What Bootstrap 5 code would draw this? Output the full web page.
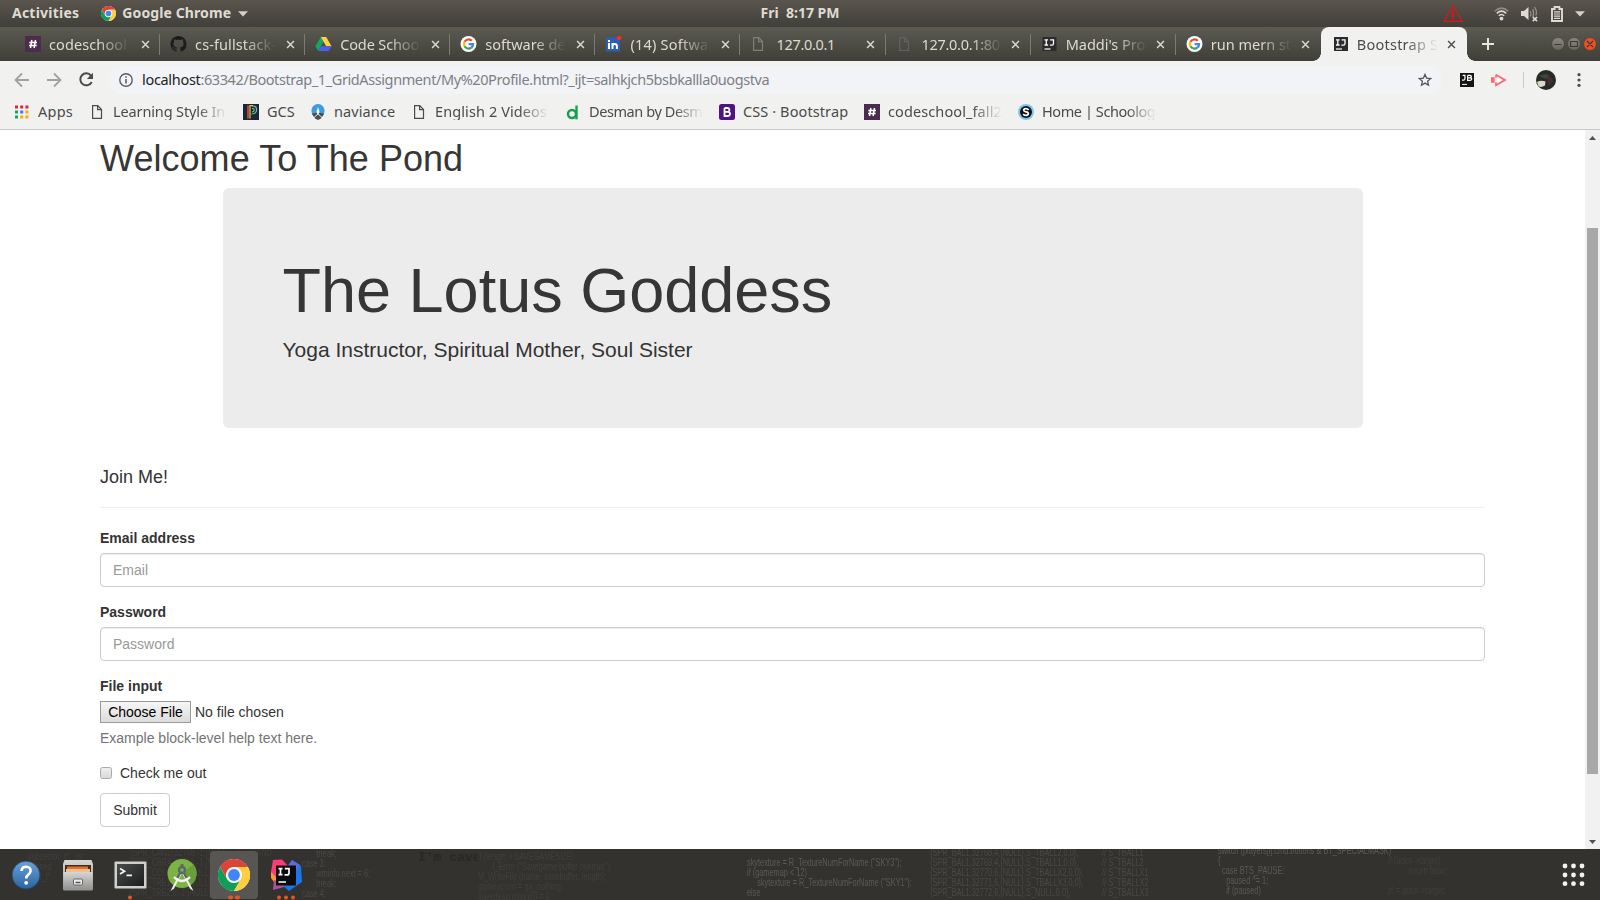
<!DOCTYPE html>
<html lang="en">
<head>
<meta charset="utf-8">
<title>Bootstrap Sample</title>
<link rel="stylesheet" href="https://cdn.jsdelivr.net/npm/bootstrap@5.3.0/dist/css/bootstrap.min.css">
<style>
html,body{height:100%;overflow:hidden}
body{font-family:"Noto Sans","Open Sans",sans-serif;font-size:14.5px;line-height:1.3;color:#4b4b4b;background:#fff}
svg{display:block;flex:none;overflow:visible}
.ls-a{letter-spacing:.23px}.ls-b{letter-spacing:.1px}.ls-c{letter-spacing:-.13px}.ls-d{letter-spacing:-.31px}.ls-e{letter-spacing:-.42px}

/* desktop top bar */
.topbar{height:27px;background:linear-gradient(#5a564e,#403f3a);color:#dfdbd2;font-weight:700;font-size:14px;display:grid;grid-template-columns:1fr auto 1fr}
.topbar .left-side{padding-left:12px}
.topbar .app-menu{margin-left:21.5px;gap:6.5px}
.topbar .tray{padding-right:15px}
.warn{margin-right:31px}.vol{margin:0 13px 0 4px}.batt{margin-right:12px}

/* browser tabs */
.tabstrip{height:34px;background:linear-gradient(#5c5b52,#3f3e38);color:#dedad1;padding-left:15px}
.tab{width:145.1px;padding:0 10.5px 0 10px;position:relative}
.tab:not(.tab-active):not(.tab-last)::after{content:"";position:absolute;right:0;top:7px;height:21px;width:1px;background:#7d7b72}
.tab .tab-name,.mark-name{white-space:nowrap;overflow:hidden}
.tab .tab-name{width:81px;margin-left:8px;-webkit-mask-image:linear-gradient(90deg,#000 60%,transparent 100%)}
.tab .tab-name.full{-webkit-mask-image:none}
.tab-close{margin-left:auto}
.tab-active{background:#f1f1ef;color:#4c4c4a;border-radius:8px 8px 0 0;width:146px;padding-left:12px;padding-right:11px}
.tab-active .foot{position:absolute;bottom:0;width:8px;height:8px}
.foot-l{left:-8px;background:radial-gradient(circle at 0 0,transparent 7.5px,#f1f1ef 8px)}
.foot-r{right:-8px;background:radial-gradient(circle at 100% 0,transparent 7.5px,#f1f1ef 8px)}
.strip-end{padding:0 3px 0 15px}

/* address row */
.toolbar{height:37px;background:#f1f1ef;padding-left:14px;padding-right:16px}
.omnibox{height:28px;width:1334px;border-radius:14px;background:#f1f3f7;color:#7e8084;padding:0 10px 0 11px}
.omnibox b{font-weight:400;color:#222}
.url{margin-left:9px;letter-spacing:-.408px}
.ext-1{margin-left:18px}.ext-2{margin-left:16px}.more{margin-left:21px;margin-right:3px}
/* bookmarks row */
.marks{height:32px;background:#f1f1ef;border-bottom:1px solid #c9c9ca;padding-left:14px}
.mark-name,.bm svg{position:relative;top:-1px}
.mark-name{margin-top:-2px}
.bm{width:154px;gap:8px;margin-top:-1px}
.bm.s1{width:75px}.bm.s2{width:67px}.bm.s3{width:101px}.bm.s4{width:145px}
.mark-name.cut{width:114px;-webkit-mask-image:linear-gradient(90deg,#000 74%,transparent 100%)}

/* page */
.page-view{height:719px;background:#fff}
.page-body{font-family:"Liberation Sans",Arial,sans-serif;font-size:14px;line-height:20px;color:#333;padding:8.7px 100px 0 100px;width:1585px}
.page-body h1{font-size:36px;line-height:1.1;margin:0 0 10px;font-weight:500;color:#363636;letter-spacing:.05px}
.hero{background:#ececec;border-radius:6px;width:1140px;margin:0 auto 30.7px 123px;padding:48px 59.5px}
.hero h1{font-size:63px;margin:20px 0 9.3px;letter-spacing:0}
.hero p{font-size:21px;line-height:30px;margin:0 0 15px}
.page-body h4{font-size:18px;line-height:19.8px;font-weight:500;margin:0;padding-top:9px;margin-bottom:19.5px}
.page-body hr{margin:0 0 20px;border-top:1px solid #eee;opacity:1;color:inherit}
.page-body .form-label{font-weight:700;margin:0 0 5px;display:block}
.page-body .form-control{height:34px;font-size:14px;line-height:20px;padding:6px 12px;border:1px solid #ccc;border-radius:4px;box-shadow:inset 0 1px 1px rgba(0,0,0,.075);margin-bottom:15px}
.page-body .form-control::placeholder{color:#999}
.choose{height:22px;width:91px;border:1px solid #999;border-radius:0;background:linear-gradient(#f6f6f6,#dcdcdc);color:#000;font-size:14px;line-height:20px;padding:0;text-align:center}
.helper{color:#737373;margin:5px 0 15px}
.tick{width:12px;height:12px;border:1px solid #a9a9a9;border-radius:2.5px;background:linear-gradient(#eee,#d9d9d9)}
.submit-btn{width:70px;height:34px;border:1px solid #ccc;border-radius:4px;font-size:14px;line-height:20px;padding:6px 0;color:#333;margin-top:10px}

.scrollcol{width:15px;background:#f1f1f1;padding:6px 2px 5px}
.thumb{width:11px;height:546px;background:#a8a8a8;margin-top:88px}

/* dock */
.dock{height:51px;background:#33322e;position:relative;overflow:hidden}
.launchers{padding:2px 15px 0 2px}
.dock .slot{width:48px;height:48px;margin-right:4px;border-radius:4px;position:relative}
.dock .slot.on{background:#575652}
.dock .slot svg{margin-top:-1px}
.pips{position:absolute;left:0;right:0;bottom:0;display:flex;gap:2.6px;justify-content:center;transform:translateY(.5px)}
.pips i{width:4.4px;height:4.4px;border-radius:50%;background:#e95420}
/* code printed on the wallpaper, visible through the dock */
.code{position:absolute;font:10px/10px "Liberation Sans",sans-serif;white-space:pre;color:#5b5a56;transform:scaleX(.735);transform-origin:0 0}
.dim{color:#4a4945}.dimmer{color:#413f3b}
.mono{font:bold 13px/14px "Liberation Mono",monospace;transform:none;color:#292825}
.c1{left:28px;top:3px}.c2{left:130px;top:-1px}.c3{left:302px;top:0}.c4{left:418px;top:2px}.c5{left:478px;top:3px}
.c6{left:747px;top:9px}.c7{left:930px;top:-1px}.c8{left:1102px;top:-1px}.c9{left:1218px;top:-3px}.c10{left:1388px;top:7px}
</style>
<script src="https://cdn.jsdelivr.net/npm/bootstrap@5.3.0/dist/js/bootstrap.bundle.min.js"></script>
</head>
<body>
<svg width="0" height="0" class="position-absolute">
 <defs>
  <linearGradient id="gBlue" x2="0" y2="1"><stop stop-color="#6ba0dc"/><stop offset="1" stop-color="#2a659f"/></linearGradient>
  <linearGradient id="gGrey" x2="0" y2="1"><stop stop-color="#d6d6d4"/><stop offset="1" stop-color="#949492"/></linearGradient>
  <linearGradient id="gTerm" x2="1" y2="1"><stop stop-color="#4a4b4b"/><stop offset="1" stop-color="#1c1d1d"/></linearGradient>
  <linearGradient id="gBtn" x2="0" y2="1"><stop stop-color="#8b897f"/><stop offset="1" stop-color="#66645c"/></linearGradient>
  <symbol id="chrome" viewBox="0 0 32 32">
   <circle cx="16" cy="16" r="16" fill="#fff"/>
   <path d="M16 8H29.86A16 16 0 0 0 2.14 8L9.07 20A8 8 0 0 1 16 8Z" fill="#db4437"/>
   <path d="M9.07 20L2.14 8A16 16 0 0 0 16 32L22.93 20A8 8 0 0 1 9.07 20Z" fill="#0f9d58"/>
   <path d="M22.93 20L16 32A16 16 0 0 0 29.86 8H16A8 8 0 0 1 22.93 20Z" fill="#ffcd40"/>
   <circle cx="16" cy="16" r="7.3" fill="#f1f1f1"/><circle cx="16" cy="16" r="5.9" fill="#4285f4"/>
  </symbol>
  <symbol id="slack" viewBox="0 0 16 16"><rect width="16" height="16" fill="#4b2c4d"/><path d="M6.9 4L5.5 12M10.5 4L9.1 12M4.3 6.4H12M4 9.6H11.7" stroke="#fff" stroke-width="1.5" fill="none"/></symbol>
  <symbol id="goog" viewBox="0 0 16 16"><circle cx="8" cy="8" r="8" fill="#fff"/><g fill="none" stroke-width="2.2">
   <path d="M4 5.8A4.6 4.6 0 0 1 11.3 4.8" stroke="#ea4335"/><path d="M4 5.8A4.6 4.6 0 0 0 4 10.3" stroke="#fbbc05"/><path d="M4 10.3A4.6 4.6 0 0 0 10.8 11.6" stroke="#34a853"/><path d="M10.8 11.6A4.6 4.6 0 0 0 12.6 8.1H8.1" stroke="#4285f4"/></g></symbol>
  <symbol id="file" viewBox="0 0 16 16"><path d="M3.6 1.7H8.8L12.5 5.5V14.4H3.6ZM8.6 1.9V5.7H12.4" fill="none" stroke="currentColor" stroke-width="1.2"/></symbol>
  <symbol id="ij" viewBox="0 0 14 14"><rect width="14" height="14" fill="#2b2b2e"/><path d="M2 2.8H5.6M3.8 2.8V8M2 8H5.6M7.6 2.8H11V6.6Q11 8.2 9.4 8.2H7.4" stroke="#fff" stroke-width="1.3" fill="none"/><path d="M2 12H8" stroke="#fff" stroke-width="1.2"/></symbol>
  <symbol id="x" viewBox="0 0 10 10"><path d="M1.2 1.2L8.8 8.8M8.8 1.2L1.2 8.8" stroke="currentColor" stroke-width="1.6"/></symbol>
 </defs>
</svg>

<header class="topbar">
 <div class="left-side d-flex align-items-center"><span class="ls-a">Activities</span>
  <div class="app-menu d-flex align-items-center"><svg width="15" height="15"><use href="#chrome"/></svg><span class="ls-b">Google Chrome</span><svg width="10" height="6"><path d="M0 .3H10L5 5.5Z" fill="#d5d1c8"/></svg></div></div>
 <div class="d-flex align-items-center">Fri&nbsp; 8:17 PM</div>
 <div class="tray d-flex align-items-center justify-content-end">
  <svg class="warn" width="20" height="17" viewBox="0 0 20 17"><path d="M10 .8L19.2 16.4H.8Z" fill="none" stroke="#f01010" stroke-width="1.1"/><path d="M10 5.5V12M10 13.2V15" stroke="#f01010" stroke-width="1.7"/></svg>
  <svg width="15" height="14" viewBox="0 0 15 14" class="me-2"><g fill="none" stroke="#dfdbd2" stroke-width="1.5"><path d="M.8 4.2Q7.5-2 14.2 4.2" opacity=".45"/><path d="M2.8 6.4Q7.5 1.9 12.2 6.4M4.8 8.8Q7.5 6 10.2 8.8"/></g><circle cx="7.5" cy="11.6" r="1.9" fill="#dfdbd2"/></svg>
  <svg class="vol" width="17" height="16" viewBox="0 0 17 16"><path d="M0 5H3L7.5 1V14L3 10H0Z" fill="#dfdbd2"/><path d="M9.3 5Q10.5 7.5 9.3 10.5M11.6 3Q13.6 7 11.8 11M13.6 1Q16.6 5.5 14.8 9.5" fill="none" stroke="#dfdbd2" stroke-width="1.2" opacity=".5"/><path d="M11.8 11L16 15.2M16 11L11.8 15.2" stroke="#dfdbd2" stroke-width="1.7"/></svg>
  <svg class="batt" width="12" height="16" viewBox="0 0 12 16"><path d="M1 3H3.6V1H8.4V3H11V15H1Z" fill="none" stroke="#dfdbd2" stroke-width="1.9"/><path d="M3 5.8H9M3 8H9M3 10.2H9M3 12.4H9" stroke="#dfdbd2" stroke-width="1.2"/></svg>
  <svg width="10" height="6"><path d="M0 .3H10L5 5.5Z" fill="#d5d1c8"/></svg>
 </div>
</header>

<div class="tabstrip d-flex">
 <div class="tab d-flex align-items-center"><svg width="16" height="16"><use href="#slack"/></svg><div class="tab-name ls-b">codeschool_</div><svg class="tab-close" width="9" height="9"><use href="#x"/></svg></div>
 <div class="tab d-flex align-items-center"><svg width="17" height="16" viewBox="0 0 16 16"><path fill="#1b1c1e" d="M8 0C3.58 0 0 3.58 0 8c0 3.54 2.29 6.53 5.47 7.59.4.07.55-.17.55-.38 0-.19-.01-.82-.01-1.49-2.01.37-2.53-.49-2.69-.94-.09-.23-.48-.94-.82-1.13-.28-.15-.68-.52-.01-.53.63-.01 1.08.58 1.23.82.72 1.21 1.87.87 2.33.66.07-.52.28-.87.51-1.07-1.78-.2-3.64-.89-3.64-3.95 0-.87.31-1.59.82-2.15-.08-.2-.36-1.02.08-2.12 0 0 .67-.21 2.2.82.64-.18 1.32-.27 2-.27s1.36.09 2 .27c1.53-1.04 2.2-.82 2.2-.82.44 1.1.16 1.92.08 2.12.51.56.82 1.27.82 2.15 0 3.07-1.87 3.75-3.65 3.95.29.25.54.73.54 1.48 0 1.07-.01 1.93-.01 2.2 0 .21.15.46.55.38A8.01 8.01 0 0 0 16 8c0-4.42-3.58-8-8-8Z"/></svg><div class="tab-name ls-b">cs-fullstack-</div><svg class="tab-close" width="9" height="9"><use href="#x"/></svg></div>
 <div class="tab d-flex align-items-center"><svg width="17" height="14" viewBox="0 0 15 13"><path d="M5 0L7.5 4.4 2.5 13 0 8.7Z" fill="#11a861"/><path d="M5 0H10L15 8.7H10Z" fill="#ffcf48"/><path d="M5 8.7H15L12.5 13H2.5Z" fill="#4b5fe8"/></svg><div class="tab-name ls-c">Code Schoo</div><svg class="tab-close" width="9" height="9"><use href="#x"/></svg></div>
 <div class="tab d-flex align-items-center"><svg width="17" height="16"><use href="#goog"/></svg><div class="tab-name">software de</div><svg class="tab-close" width="9" height="9"><use href="#x"/></svg></div>
 <div class="tab d-flex align-items-center"><svg width="17" height="16" viewBox="0 0 17 16"><rect x="1" y="1.5" width="14" height="14" fill="#2c5fb3"/><rect x="3" y="7" width="2" height="6" fill="#fff"/><rect x="3" y="4" width="2" height="2" fill="#fff"/><path d="M7.5 13V7M7.5 9.8Q7.7 7.9 9.7 7.9Q11.9 7.9 11.9 10V13" stroke="#fff" stroke-width="2" fill="none"/><circle cx="14" cy="2" r="2.3" fill="#f22c3e"/></svg><div class="tab-name ls-a">(14) Softwar</div><svg class="tab-close" width="9" height="9"><use href="#x"/></svg></div>
 <div class="tab d-flex align-items-center"><svg width="18" height="16" viewBox="1 0 16 16" color="#7f7e78"><use href="#file" width="16" height="16"/></svg><div class="tab-name full ls-d">127.0.0.1</div><svg class="tab-close" width="9" height="9"><use href="#x"/></svg></div>
 <div class="tab d-flex align-items-center"><svg width="18" height="16" viewBox="1 0 16 16" color="#62625f"><use href="#file" width="16" height="16"/></svg><div class="tab-name ls-d">127.0.0.1:80</div><svg class="tab-close" width="9" height="9"><use href="#x"/></svg></div>
 <div class="tab d-flex align-items-center"><svg width="17" height="14"><use href="#ij"/></svg><div class="tab-name">Maddi's Pro</div><svg class="tab-close" width="9" height="9"><use href="#x"/></svg></div>
 <div class="tab tab-last d-flex align-items-center"><svg width="17" height="16"><use href="#goog"/></svg><div class="tab-name">run mern st</div><svg class="tab-close" width="9" height="9"><use href="#x"/></svg></div>
 <div class="tab tab-active d-flex align-items-center"><span class="foot foot-l"></span><span class="foot foot-r"></span><svg width="16" height="14"><use href="#ij"/></svg><div class="tab-name ls-a">Bootstrap S</div><svg class="tab-close" width="9" height="9"><use href="#x"/></svg></div>
 <div class="strip-end d-flex align-items-center flex-fill">
  <svg width="12" height="12" viewBox="0 0 12 12"><path d="M6 0V12M0 6H12" stroke="#e8e5dc" stroke-width="2"/></svg>
  <svg class="ms-auto" width="46" height="14" viewBox="0 0 46 14"><g stroke="#3b3a36"><circle cx="7" cy="7" r="6.4" fill="url(#gBtn)" stroke-width=".6"/><circle cx="23" cy="7" r="6.4" fill="url(#gBtn)" stroke-width=".6"/><circle cx="39" cy="7" r="6.4" fill="#ea5226" stroke-width=".6"/><path d="M3.5 7.5H10.5M19.5 4.5H26.5V9.5H19.5ZM36 4L42 10M42 4L36 10" fill="none" stroke-width="1.2"/></g></svg>
 </div>
</div>

<div class="toolbar d-flex align-items-center">
 <svg width="94" height="16" viewBox="0 0 94 16" fill="none"><path d="M15 8H2M8 1.5L1.5 8L8 14.5" stroke="#a2a2a1" stroke-width="1.8"/><path d="M33 8H46M40 1.5L46.5 8L40 14.5" stroke="#a2a2a1" stroke-width="1.8"/><path d="M77 3.6A6 6 0 1 0 77.7 10" stroke="#4b4b4d" stroke-width="2"/><path d="M79 .8V7H72.8Z" fill="#4b4b4d"/></svg>
 <div class="omnibox d-flex align-items-center">
  <svg width="14" height="14" viewBox="0 0 14 14"><circle cx="7" cy="7" r="6.2" fill="none" stroke="#5c5e62" stroke-width="1.4"/><path d="M7 6V10.5M7 3.2V4.8" stroke="#5c5e62" stroke-width="1.6"/></svg>
  <span class="url text-nowrap"><b class="ls-d">localhost</b>:63342/Bootstrap_1_GridAssignment/My%20Profile.html?_ijt=salhkjch5bsbkallla0uogstva</span>
  <svg class="ms-auto" width="14" height="14" viewBox="0 0 14 14"><path d="M7 1.4L8.6 5.1L12.7 5.5L9.6 8.2L10.5 12.2L7 10.1L3.5 12.2L4.4 8.2L1.3 5.5L5.4 5.1Z" fill="none" stroke="#55565a" stroke-width="1.3"/></svg>
 </div>
 <svg class="ext-1" width="14" height="14" viewBox="0 0 14 14"><rect width="14" height="14" fill="#161616"/><path d="M2 7.2H3.5Q4.9 7.2 4.9 5.7V2.3H2.6M7.6 2.4V7.3H10.2Q11.8 7.2 11.8 6Q11.8 4.9 10.2 4.8H7.6M10 4.7Q11.4 4.6 11.4 3.6Q11.4 2.5 10 2.4H7.6" fill="none" stroke="#fff" stroke-width="1.2"/><path d="M2 11.4H7" stroke="#fff"/></svg>
 <svg class="ext-2" width="17" height="14" viewBox="0 0 17 14"><path d="M1 4.2H4.6V9.8H1Z" fill="#ff6673"/><path d="M6 1.8L15 7L6 12.2V9.5M6 1.8V4.5" fill="none" stroke="#ff6673" stroke-width="1.8"/><path d="M6.5 5L12 7L6.5 9Z" fill="#fff"/></svg>
 <svg class="ext-2" width="1" height="16"><path d="M.5 0V16" stroke="#cacaca"/></svg>
 <svg width="20" height="20" viewBox="0 0 20 20" class="ms-auto"><circle cx="10" cy="10" r="10" fill="#292a28"/><path d="M1 12Q5 10 9.5 11.5L9 15.5Q5 18 2.5 16Z" fill="#d9d9c4"/><path d="M10 6Q15 5 17 11L13 16Z" fill="#46302e"/><path d="M3 6Q8 3 13 5L10 9Z" fill="#3e4640"/></svg>
 <svg class="more" width="4" height="14" viewBox="0 0 4 14"><g fill="#4b4b4d"><circle cx="2" cy="1.7" r="1.6"/><circle cx="2" cy="7" r="1.6"/><circle cx="2" cy="12.3" r="1.6"/></g></svg>
</div>

<nav class="marks d-flex align-items-center">
 <div class="bm s1 d-flex align-items-center"><svg width="16" height="14" viewBox="0 0 16 14"><path d="M1 2H14.5" stroke="#ea1f3c" stroke-width="3" stroke-dasharray="3 2.2"/><path d="M1 7H4" stroke="#12a85b" stroke-width="3"/><path d="M6.2 7H9.2" stroke="#4b72f2" stroke-width="3"/><path d="M11.4 7H14.4" stroke="#f0b010" stroke-width="3"/><path d="M1 12H4" stroke="#12a85b" stroke-width="3"/><path d="M6.2 12H14.5" stroke="#f0b010" stroke-width="3" stroke-dasharray="3 2.2"/></svg><span class="mark-name ls-a">Apps</span></div>
 <div class="bm d-flex align-items-center"><svg width="16" height="16"><use href="#file"/></svg><span class="mark-name cut ls-c">Learning Style In</span></div>
 <div class="bm s2 d-flex align-items-center"><svg width="16" height="16" viewBox="0 0 16 16"><rect width="16" height="16" fill="#1d2536"/><path d="M5 1.5V14.5" stroke="#e9573f" stroke-width="1.4"/><path d="M7 14.5V1.7H10" stroke="#f3c33c" stroke-width="1.2" fill="none"/><path d="M9 2H10Q13.8 2.3 13.6 6Q13.4 9.8 8.5 10M9 4.5Q11.3 4.3 11.2 6.1Q11.2 7.8 9 8" stroke="#65c5a4" fill="none" stroke-width="1.1"/></svg><span class="mark-name">GCS</span></div>
 <div class="bm s3 d-flex align-items-center"><svg width="16" height="16" viewBox="0 0 16 16"><circle cx="8" cy="6.7" r="6.6" fill="#3b9be3"/><path d="M1.8 9.8Q8 7.5 14.2 9.8L11 14.5L8 16L5 14.5Z" fill="#4b4c4d"/><path d="M8 3L9.6 8L8 11L6.4 8Z" fill="#fff"/><path d="M3.5 14L8 9.8L12.5 14" fill="none" stroke="#f1f1ef"/></svg><span class="mark-name ls-b">naviance</span></div>
 <div class="bm d-flex align-items-center"><svg width="16" height="16"><use href="#file"/></svg><span class="mark-name cut ls-b">English 2 Videos</span></div>
 <div class="bm d-flex align-items-center"><svg width="16" height="16" viewBox="0 0 16 16"><circle cx="7" cy="10" r="4" fill="none" stroke="#17a050" stroke-width="2.5"/><path d="M11.5 1.5V15.3" stroke="#17a050" stroke-width="2.4"/></svg><span class="mark-name cut ls-e">Desman by Desm</span></div>
 <div class="bm s4 d-flex align-items-center"><svg width="16" height="16" viewBox="0 0 16 16"><rect width="16" height="16" rx="2.5" fill="#4f1480"/><path d="M5.5 4V12H8.5Q11 12 11 9.8Q11 8 8.8 7.8H5.5M8.6 7.8Q10.4 7.6 10.4 5.9Q10.4 4 8.3 4H5.5" fill="none" stroke="#fff" stroke-width="1.8"/></svg><span class="mark-name ls-b">CSS · Bootstrap</span></div>
 <div class="bm d-flex align-items-center"><svg width="16" height="16"><use href="#slack"/></svg><span class="mark-name cut ls-b">codeschool_fall2</span></div>
 <div class="bm d-flex align-items-center"><svg width="16" height="16" viewBox="0 0 16 16"><circle cx="8" cy="8" r="8" fill="#7cc6ee"/><circle cx="8" cy="8" r="6" fill="#111"/><path d="M10.6 5.9Q9.6 4.6 7.8 4.7Q5.6 4.9 5.7 6.3Q5.8 7.5 8 7.9Q10.4 8.3 10.3 9.7Q10.2 11.2 8 11.3Q6.2 11.3 5.2 10.1" stroke="#fff" stroke-width="1.7" fill="none"/></svg><span class="mark-name cut ls-e">Home | Schoolog</span></div>
</nav>

<div class="page-view d-flex">
 <main class="page-body">
  <h1>Welcome To The Pond</h1>
  <section class="hero"><h1>The Lotus Goddess</h1><p>Yoga Instructor, Spiritual Mother, Soul Sister</p></section>
  <h4>Join Me!</h4>
  <hr>
  <form>
   <label class="form-label" for="em">Email address</label>
   <input id="em" type="email" class="form-control" placeholder="Email">
   <label class="form-label" for="pw">Password</label>
   <input id="pw" type="password" class="form-control" placeholder="Password">
   <span class="form-label">File input</span>
   <div class="d-flex align-items-center gap-1"><button type="button" class="choose">Choose File</button><span>No file chosen</span></div>
   <p class="helper">Example block-level help text here.</p>
   <div class="d-flex align-items-center"><span class="tick"></span><span class="ms-2">Check me out</span></div>
   <button type="button" class="btn submit-btn">Submit</button>
  </form>
 </main>
 <div class="scrollcol d-flex flex-column align-items-center">
  <svg width="7" height="4"><path d="M0 4H7L3.5 0Z" fill="#505050"/></svg>
  <div class="thumb"></div>
  <svg class="mt-auto" width="7" height="4"><path d="M0 0H7L3.5 4Z" fill="#505050"/></svg>
 </div>
</div>

<footer class="dock">
 <div class="code dimmer c1">subsector_t*   ss;
 signed
int  i_t*</div>
 <div class="code dimmer c2">{SPR_CAND,32768,-1,{NULL}}, // S_CAND
{SPR_CBRA,32768,-1,{NULL}},
{SPR_COL6,0,-1,{NULL},S_NULL},
{SPR_TRE1,0,-1,{NULL},S_NULL},
{SPR_TRE2,0,-1,{NULL},S_NULL},</div>
 <div class="code dim c3">       break;
case 3:
       wminfo.next = 6;
       break;
case 4:</div>
 <div class="code mono c4">I'm cave</div>
 <div class="code dimmer c5">if (length > SAVEGAMESIZE)
       I_Error ("Savegame buffer overrun");
M_WriteFile (name, savebuffer, length);
gameaction = ga_nothing;
savedescription[0] = 0;</div>
 <div class="code c6">skytexture = R_TextureNumForName ("SKY3");
if (gamemap &lt; 12)
     skytexture = R_TextureNumForName ("SKY1");
else</div>
 <div class="code dim c7">{SPR_BAL1,32768,4,{NULL},S_TBALL2,0,0},
{SPR_BAL1,32769,4,{NULL},S_TBALL1,0,0},
{SPR_BAL1,32770,6,{NULL},S_TBALLX2,0,0},
{SPR_BAL1,32771,6,{NULL},S_TBALLX3,0,0},
{SPR_BAL1,32772,6,{NULL},S_NULL,0,0},</div>
 <div class="code dim c8">// S_TBALL1
// S_TBALL2
// S_TBALLX1
// S_TBALLX2
// S_TBALLX3</div>
 <div class="code c9">switch (players[i].cmd.buttons &amp; BT_SPECIALMASK)
{
  case BTS_PAUSE:
    paused ^= 1;
    if (paused)</div>
 <div class="code dimmer c10">if (actor->target)
          return false;

pl = actor->target;</div>

 <div class="launchers position-relative d-flex align-items-start">
  <div class="slot d-flex align-items-center justify-content-center"><svg width="30" height="30" viewBox="0 0 30 30"><circle cx="15" cy="15" r="13.8" fill="url(#gBlue)" stroke="#214f80" stroke-width=".7"/><path d="M10.5 11Q10.8 6.8 15.2 6.8Q19.7 6.9 19.6 10.8Q19.5 13 17.3 14.6Q15.2 16.2 15.2 18.5" fill="none" stroke="#fff" stroke-width="2.6"/><circle cx="15.2" cy="22.8" r="1.9" fill="#fff"/></svg></div>
  <div class="slot d-flex align-items-center justify-content-center"><svg width="32" height="32" viewBox="0 0 32 32"><path d="M2.5 1H29.5L31 5V30Q31 31.5 29.5 31.5H2.5Q1 31.5 1 30V5Z" fill="url(#gGrey)"/><rect x="3" y="6" width="26" height="8" fill="#4a2b16"/><path d="M5 7.5H26V13H5Z" fill="#dc7433"/><path d="M4 10H28V13H4Z" fill="#efc08c"/><path d="M1.5 13H30.5V30H1.5Z" fill="url(#gGrey)"/><rect x="11.5" y="20" width="9" height="6" rx="1" fill="#ececec" stroke="#666"/><path d="M13.5 23.5H18.5" stroke="#555" stroke-width="1.5"/></svg></div>
  <div class="slot d-flex align-items-center justify-content-center"><svg width="33" height="28" viewBox="0 0 33 28"><rect x=".5" y=".5" width="32" height="27" rx="1" fill="#cfcfcd"/><rect x="3" y="3" width="27" height="22" fill="url(#gTerm)"/><path d="M6 7.5L10.5 10.2L6 13M12.5 14.3H18" fill="none" stroke="#f4f4f4" stroke-width="1.7"/></svg><div class="pips"><i></i></div></div>
  <div class="slot d-flex align-items-center justify-content-center"><svg width="32" height="34" viewBox="0 0 32 34"><circle cx="16" cy="15.5" r="14.5" fill="#7cb342"/><path d="M16 15L27.5 6.5A14.5 14.5 0 0 1 27 25L22 26Z" fill="#689f38"/><path d="M14.3 14L6 30L4.5 33L8 30.5L15.6 16ZM17.7 14L26 30L27.5 33L24 30.5L16.4 16Z" fill="#f2f2f2"/><path d="M8 19Q16 27 24 19" stroke="#f2f2f2" stroke-width="2.4" fill="none"/><path d="M16 6V10" stroke="#5c6670" stroke-width="3"/><circle cx="16" cy="12" r="3" fill="#7cb342" stroke="#5c6670" stroke-width="2.4"/><path d="M14 15L11.5 20M18 15L20.5 20" stroke="#5c6670" stroke-width="2.4"/></svg></div>
  <div class="slot on d-flex align-items-center justify-content-center"><svg width="32" height="32"><use href="#chrome"/></svg><div class="pips"><i></i><i></i></div></div>
  <div class="slot d-flex align-items-center justify-content-center"><svg width="32" height="32" viewBox="0 0 32 32"><path d="M1 13L5 11L9 20L4 23L1 19Z" fill="#f99b34"/><path d="M3 1L12 .5L18 7L8 20L1 13Z" fill="#fe3d78"/><path d="M22 1L31 7L32 23L19 32L12 26L18 8Z" fill="#1b76ee"/><path d="M22 1L30 6L24 14L17 8Z" fill="#5a6de0"/><path d="M4 21L16 24L14 28L3 31Z" fill="#a9559c"/><rect x="6" y="6.5" width="20" height="20" fill="#0c0c0e"/><path d="M8.5 9.6H12.5M10.5 9.6V15.7M8.5 15.7H12.5M14.8 9.6H19V13.9Q19 15.9 17 15.9H14.5" fill="none" stroke="#fff" stroke-width="1.7"/><path d="M8.5 23H16" stroke="#fff" stroke-width="1.5"/></svg><div class="pips"><i></i><i></i><i></i></div></div>
  <svg class="ms-auto align-self-center" width="24" height="24" viewBox="0 0 24 24"><g fill="#f4f2ee"><circle cx="4" cy="3" r="2.4"/><circle cx="12.5" cy="3" r="2.4"/><circle cx="21" cy="3" r="2.4"/><circle cx="4" cy="12" r="2.4"/><circle cx="12.5" cy="12" r="2.4"/><circle cx="21" cy="12" r="2.4"/><circle cx="4" cy="20.7" r="2.4"/><circle cx="12.5" cy="20.7" r="2.4"/><circle cx="21" cy="20.7" r="2.4"/></g></svg>
 </div>
</footer>
</body>
</html>
